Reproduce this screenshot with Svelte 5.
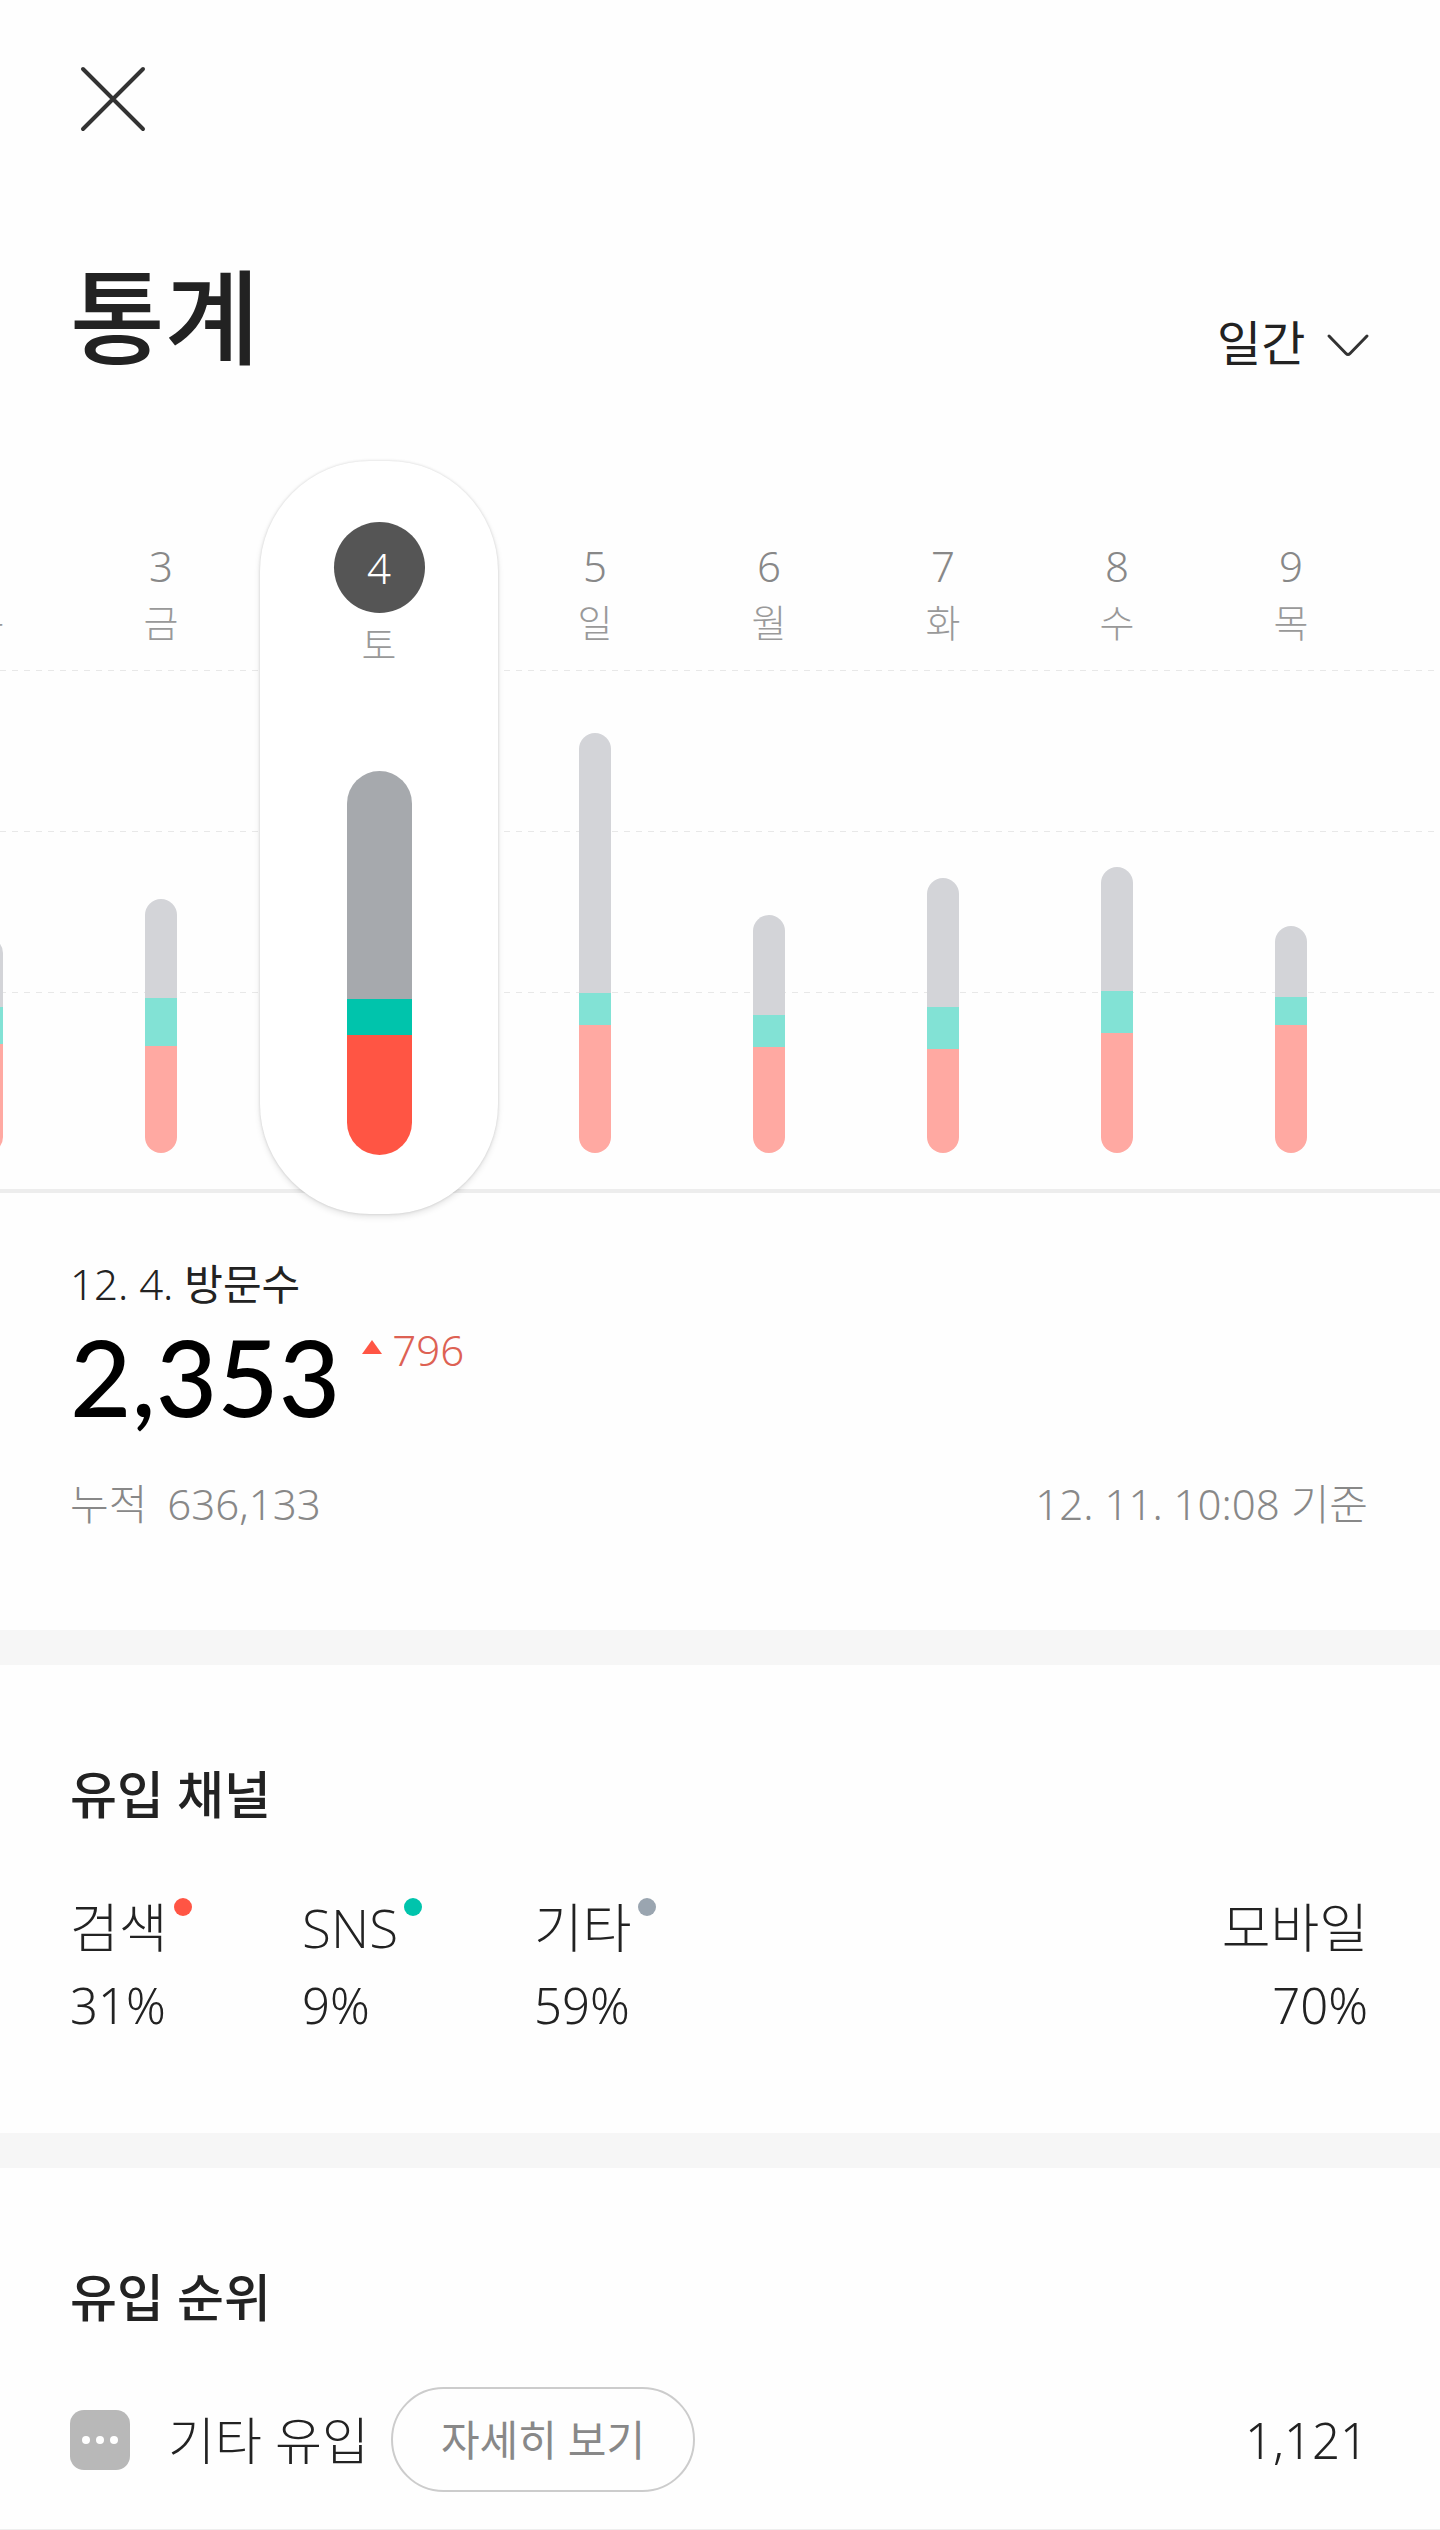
<script>
  const BASE = 1153;
  const days = [
    { date: 2, name: '목', top: 937, sns: 1007, search: 1044 },
    { date: 3, name: '금', top: 899, sns: 998, search: 1046 },
    { date: 4, name: '토', top: 769, sns: 997, search: 1033 },
    { date: 5, name: '일', top: 733, sns: 993, search: 1025 },
    { date: 6, name: '월', top: 915, sns: 1015, search: 1047 },
    { date: 7, name: '화', top: 878, sns: 1007, search: 1049 },
    { date: 8, name: '수', top: 867, sns: 991, search: 1033 },
    { date: 9, name: '목', top: 926, sns: 997, search: 1025 }
  ].map((d) => ({
    date: d.date,
    name: d.name,
    other: d.sns - d.top,
    sns: d.search - d.sns,
    search: BASE - d.search
  }));

  const channels = [
    { label: '검색', value: '31%', tone: 'search' },
    { label: 'SNS', value: '9%', tone: 'sns' },
    { label: '기타', value: '59%', tone: 'other' }
  ];

  let selected = $state(4);
  let period = $state('일간');
</script>

<main>
  <header>
    <button class="close" type="button" aria-label="닫기">
      <svg viewBox="0 0 80 80" aria-hidden="true"><path d="M13 11L73 71M73 11L13 71" /></svg>
    </button>
    <div class="title-row">
      <h1>통계</h1>
      <div class="period">
        <select bind:value={period} aria-label="기간">
          <option>일간</option>
          <option>주간</option>
          <option>월간</option>
        </select>
        <svg viewBox="0 0 44 26" aria-hidden="true"><path d="M3 3L20 20.500Q22 22.500 24 20.500L41 3" /></svg>
      </div>
    </div>
  </header>

  <section class="chart" aria-label="일간 방문수">
    <div class="lines" aria-hidden="true">
      <svg><line x1="0" y1="0.500" x2="100%" y2="0.500" /></svg>
      <svg><line x1="0" y1="0.500" x2="100%" y2="0.500" /></svg>
      <svg><line x1="0" y1="0.500" x2="100%" y2="0.500" /></svg>
      <div class="axis"></div>
    </div>
    <div class="days">
      {#each days as day}
        <button
          type="button"
          class="day"
          class:selected={day.date === selected}
          aria-pressed={day.date === selected}
          onclick={() => (selected = day.date)}
        >
          <span class="date">{day.date}</span>
          <span class="name">{day.name}</span>
          <span class="bar">
            <span class="seg other" style="height: {day.other}px"></span>
            <span class="seg sns" style="height: {day.sns}px"></span>
            <span class="seg search" style="height: {day.search}px"></span>
          </span>
        </button>
      {/each}
    </div>
  </section>

  <section class="summary">
    <h2 class="caption"><span class="num">12. 4.</span> 방문수</h2>
    <div class="total">
      <strong>2,353</strong>
      <span class="delta">
        <svg viewBox="0 0 20 14" aria-hidden="true"><path d="M10 0L20 14H0Z" /></svg>796
      </span>
    </div>
    <div class="foot">
      <span class="sum"><span>누적</span><span class="num">636,133</span></span>
      <span><span class="num">12. 11. 10:08</span> 기준</span>
    </div>
  </section>

  <section class="block">
    <h2>유입 채널</h2>
    <dl>
      {#each channels as c}
        <div class="channel">
          <dt>{c.label}<i class="dot {c.tone}"></i></dt>
          <dd>{c.value}</dd>
        </div>
      {/each}
      <div class="channel mobile">
        <dt>모바일</dt>
        <dd>70%</dd>
      </div>
    </dl>
  </section>

  <section class="block rank">
    <h2>유입 순위</h2>
    <ul>
      <li>
        <svg class="etc" viewBox="0 0 60 60" aria-hidden="true">
          <rect width="60" height="60" rx="14" />
          <circle cx="16" cy="30" r="4" /><circle cx="30" cy="30" r="4" /><circle cx="44" cy="30" r="4" />
        </svg>
        <span class="source">기타 유입</span>
        <button class="more" type="button">자세히 보기</button>
        <span class="count">1,121</span>
      </li>
    </ul>
  </section>
</main>

<style>
  :global(body) {
    margin: 0;
    background: #fefefe;
  }
  main {
    font-family: 'Open Sans', 'Noto Sans CJK KR', sans-serif;
    font-size: 42px;
    line-height: 52px;
    color: #222;
    overflow: hidden;
  }
  button,
  select {
    font: inherit;
    color: inherit;
    background: none;
    border: 0;
    margin: 0;
    padding: 0;
    cursor: pointer;
  }
  h1,
  h2,
  dl,
  dd,
  ul {
    margin: 0;
    padding: 0;
  }
  svg {
    display: block;
    fill: none;
  }
  .num,
  .date,
  .delta,
  .count,
  dd {
    font-family: 'Noto Sans', 'Open Sans', sans-serif;
    font-weight: 350;
  }

  header {
    padding: 58px 70px 84px;
  }
  .close {
    display: block;
  }
  .close svg {
    width: 80px;
    height: 80px;
    stroke: #333;
    stroke-width: 4;
    stroke-linecap: round;
  }
  .title-row {
    display: flex;
    justify-content: space-between;
    align-items: flex-end;
    margin-top: 119px;
  }
  h1 {
    font-size: 103px;
    line-height: 120px;
    font-weight: 500;
  }
  .period {
    display: grid;
    align-items: center;
    justify-items: end;
    margin-bottom: 4px;
  }
  .period select,
  .period svg {
    grid-area: 1 / 1;
  }
  .period select {
    appearance: none;
    font-size: 48px;
    line-height: 60px;
    height: 60px;
    padding-right: 64px;
  }
  .period svg {
    width: 44px;
    height: 26px;
    margin-top: 6px;
    stroke: #333;
    stroke-width: 3;
    stroke-linecap: round;
    pointer-events: none;
  }

  .chart {
    display: grid;
  }
  .lines,
  .days {
    grid-area: 1 / 1;
    min-width: 0;
  }
  .lines {
    display: flex;
    flex-direction: column;
    gap: 160px;
    padding-top: 209px;
  }
  .lines svg {
    width: 100%;
    height: 1px;
  }
  .lines line {
    stroke: #e8e8e8;
    stroke-width: 1;
    stroke-dasharray: 6 6;
  }
  .axis {
    height: 4px;
    margin-top: 36px;
    background: #ededed;
  }
  .days {
    display: flex;
    justify-content: flex-end;
    height: 753px;
    padding-right: 62px;
  }
  .day {
    flex: none;
    display: flex;
    flex-direction: column;
    align-items: center;
    box-sizing: border-box;
    width: 174px;
    padding: 73px 0 61px;
  }
  .date {
    line-height: 64px;
    color: #888;
  }
  .name {
    margin-top: 2px;
    font-size: 38px;
    line-height: 44px;
    font-weight: 300;
    color: #999;
  }
  .bar {
    display: block;
    width: 32px;
    margin-top: auto;
    border-radius: 16px;
    overflow: hidden;
  }
  .seg {
    display: block;
  }
  .seg.other {
    background: #d3d4d8;
  }
  .seg.sns {
    background: #82e2d5;
  }
  .seg.search {
    background: #ffa9a2;
  }
  .selected {
    width: 238px;
    margin: 0 10px 0 12px;
    padding: 61px 0 59px;
    border-radius: 110px;
    background: #fff;
    box-shadow:
      0 0 3px #00000026,
      0 3px 6px #0000001a;
  }
  .selected .date {
    width: 91px;
    line-height: 91px;
    border-radius: 50%;
    background: #555;
    color: #fff;
  }
  .selected .name {
    margin-top: 9px;
  }
  .selected .bar {
    width: 65px;
    border-radius: 33px;
  }
  .selected .other {
    background: #a6a9ad;
  }
  .selected .sns {
    background: #00c4ac;
  }
  .selected .search {
    background: #ff5544;
  }

  .summary {
    padding: 44px 72px 100px 70px;
  }
  .caption {
    font-size: 42px;
    font-weight: 400;
  }
  .total {
    display: flex;
    align-items: flex-start;
    gap: 22px;
    margin-top: 6px;
  }
  .total strong {
    font-family: Lato, 'Open Sans', sans-serif;
    font-size: 106px;
    line-height: 120px;
    font-weight: 500;
    color: #000;
  }
  .delta {
    display: flex;
    align-items: center;
    gap: 10px;
    margin-top: 8px;
    color: #dd6153;
  }
  .delta svg {
    width: 20px;
    height: 14px;
    margin-bottom: 6px;
    fill: #ff5544;
  }
  .foot {
    display: flex;
    justify-content: space-between;
    margin-top: 42px;
    color: #888;
    font-weight: 300;
  }
  .sum {
    display: flex;
    gap: 20px;
  }

  .block {
    border-top: 35px solid #f6f6f6;
    padding: 97px 72px 98px 70px;
  }
  .block h2 {
    font-size: 51px;
    line-height: 64px;
    font-weight: 500;
  }
  dl {
    display: flex;
    margin-top: 70px;
  }
  .channel {
    width: 232px;
  }
  dt {
    display: flex;
    gap: 6px;
    font-size: 53px;
    line-height: 64px;
    font-weight: 300;
  }
  dd {
    margin-top: 15px;
    font-size: 49px;
    line-height: 60px;
  }
  .dot {
    width: 18px;
    height: 18px;
    margin-top: 2px;
    border-radius: 50%;
  }
  .dot.search {
    background: #ff5544;
  }
  .dot.sns {
    background: #00c4ac;
  }
  .dot.other {
    background: #9aa5b0;
  }
  .mobile {
    width: auto;
    margin-left: auto;
    text-align: right;
  }

  .rank {
    padding-bottom: 0;
  }
  ul {
    list-style: none;
    margin: 58px -72px 0 -70px;
  }
  li {
    display: flex;
    align-items: center;
    padding: 0 72px 37px 70px;
    border-bottom: 1px solid #eee;
  }
  .etc {
    width: 60px;
    height: 60px;
  }
  .etc rect {
    fill: #b8b8b8;
  }
  .etc circle {
    fill: #fff;
  }
  .source {
    margin: 0 22px 0 38px;
    font-size: 51px;
    line-height: 64px;
    font-weight: 300;
  }
  .more {
    box-sizing: border-box;
    height: 105px;
    padding: 0 48px;
    border: 2px solid #ccc;
    border-radius: 53px;
    color: #888;
  }
  .count {
    margin-left: auto;
    font-size: 49px;
    line-height: 60px;
  }
</style>
